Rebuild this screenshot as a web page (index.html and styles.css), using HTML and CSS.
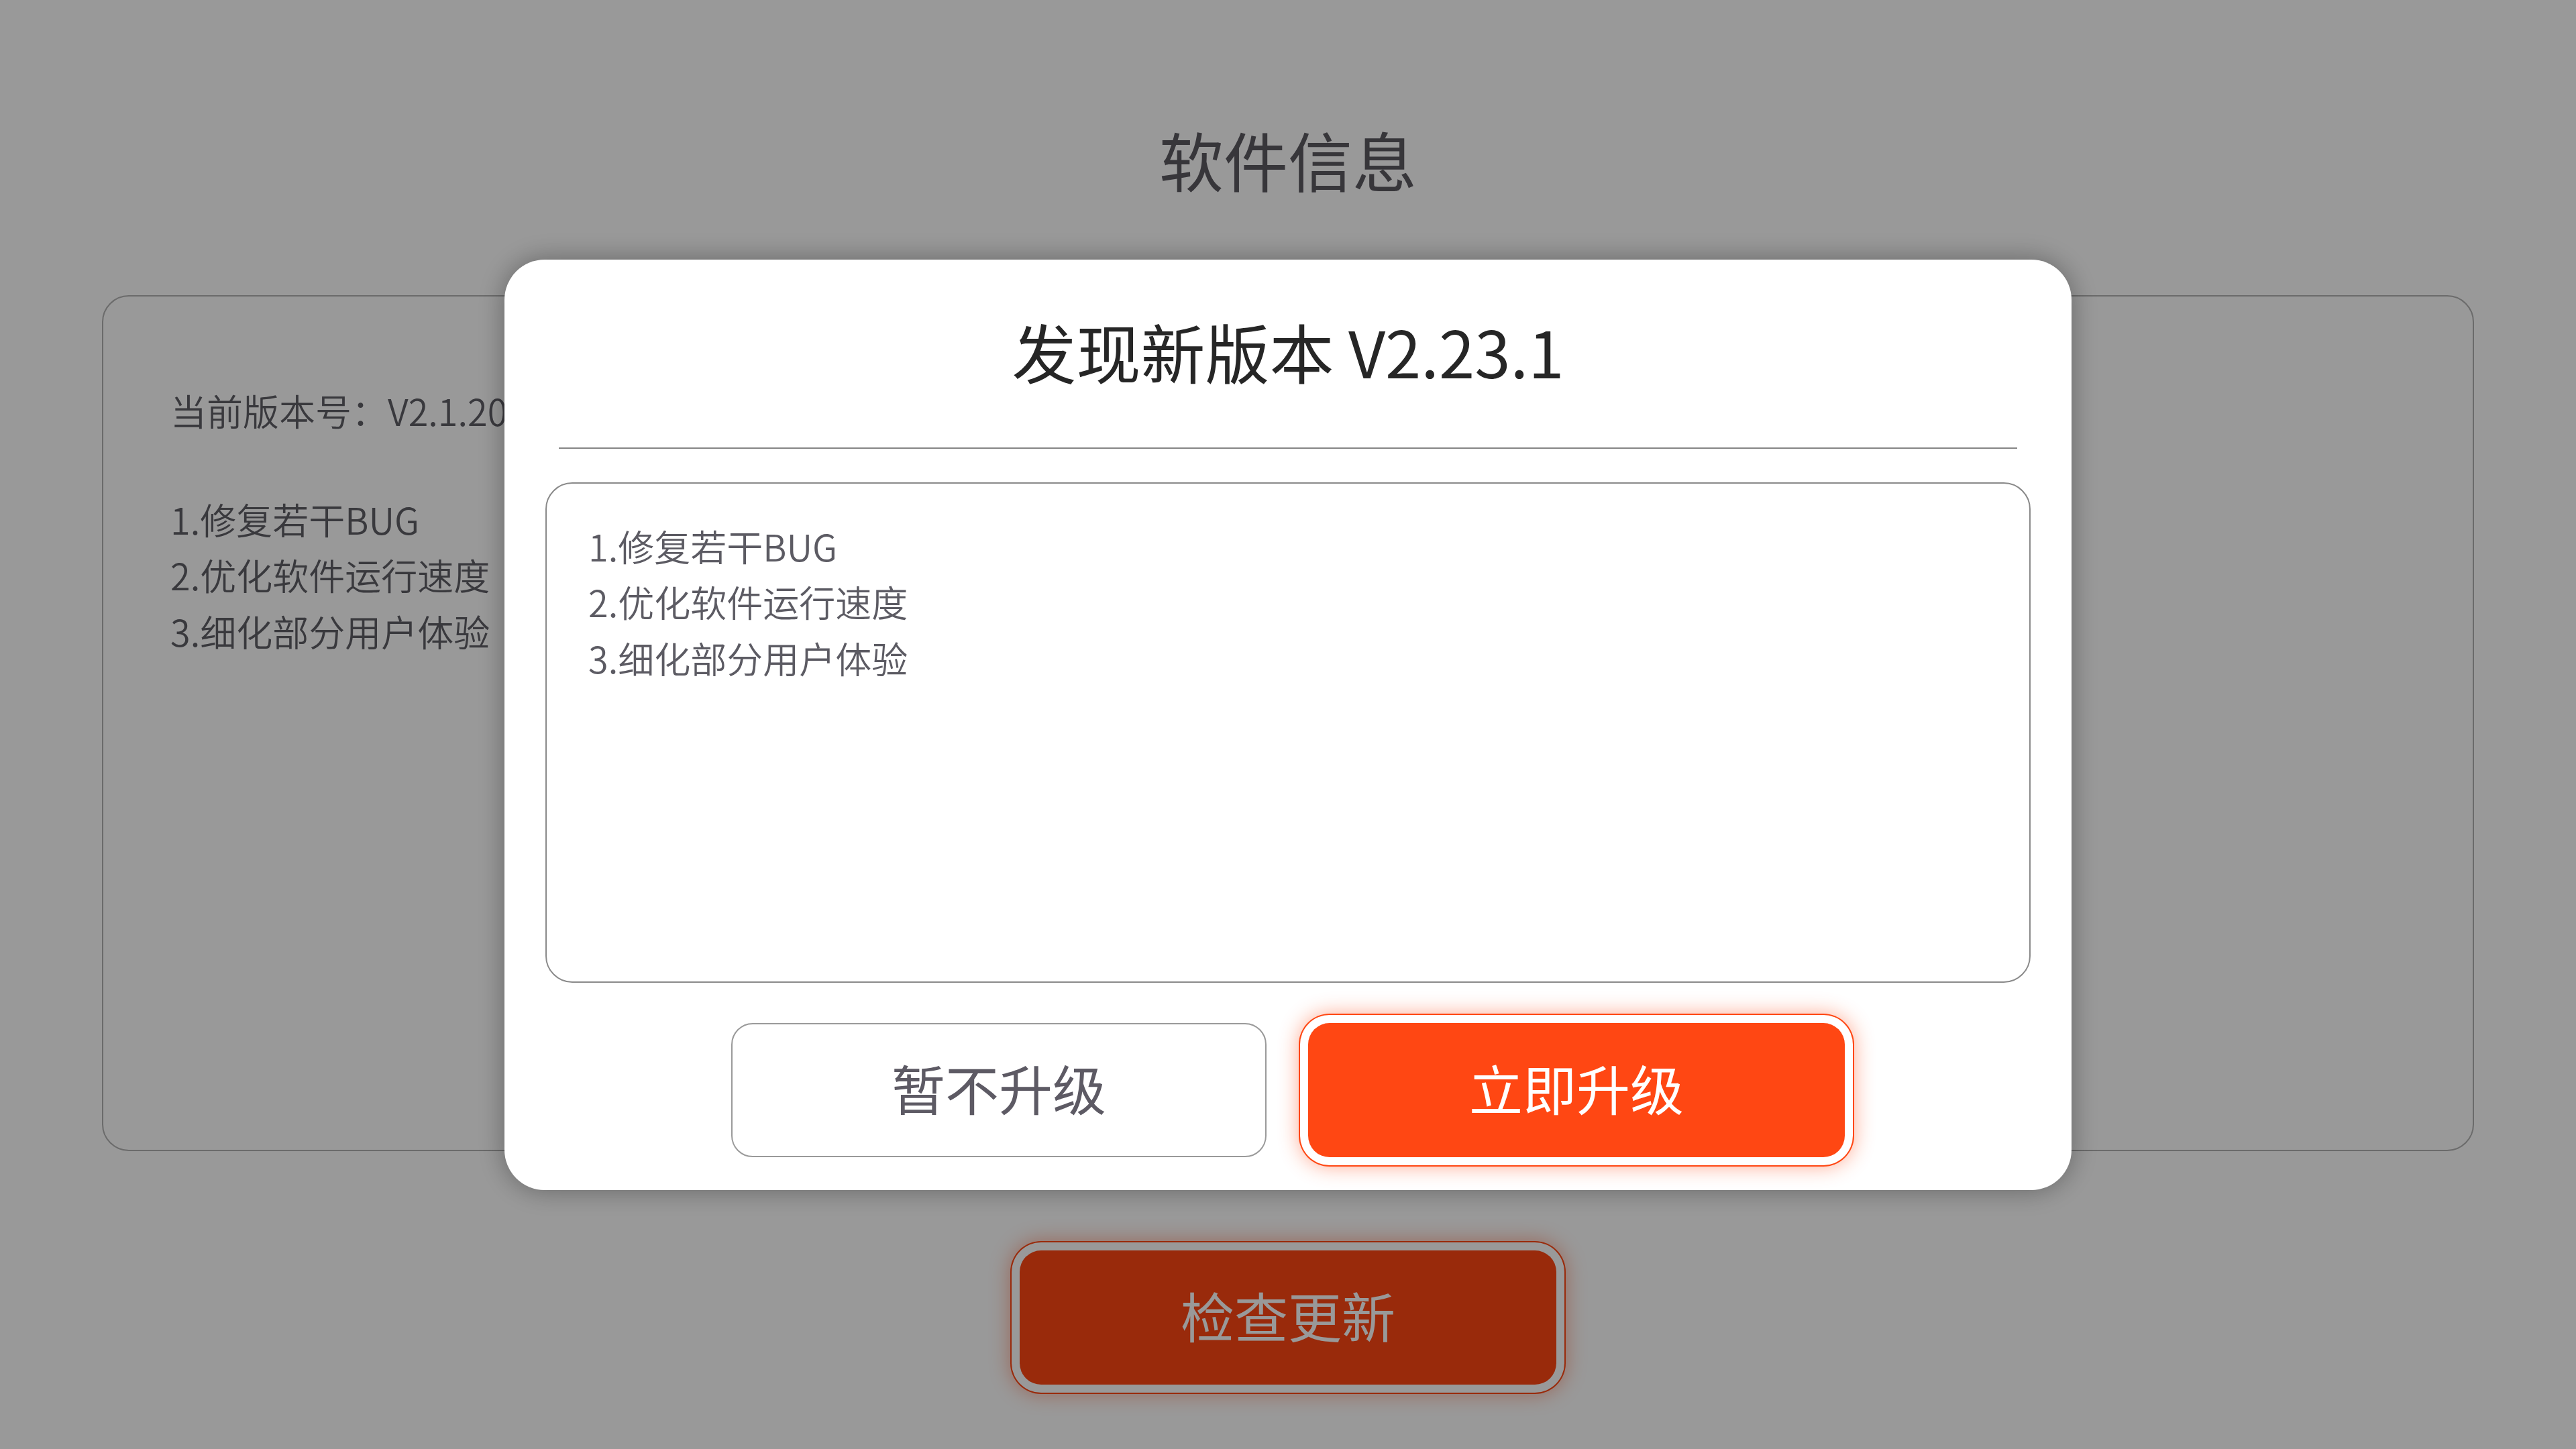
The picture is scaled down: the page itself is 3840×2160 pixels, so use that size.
FILE: index.html
```html
<!DOCTYPE html>
<html lang="zh-CN">
<head>
<meta charset="utf-8">
<title>软件信息</title>
<link rel="stylesheet" href="styles.css">
</head>
<body>
<div class="page">
  <h1 class="page-title">软件信息</h1>
  <section class="info-card">
    <p class="version">当前版本号：V2.1.20</p>
    <ul class="notes">
      <li>1.修复若干BUG</li>
      <li>2.优化软件运行速度</li>
      <li>3.细化部分用户体验</li>
    </ul>
  </section>
  <button class="btn btn-primary check-btn">检查更新</button>
</div>

<div class="overlay">
  <div class="modal">
    <h2 class="modal-title">发现新版本 V2.23.1</h2>
    <div class="divider"></div>
    <div class="changelog">
      <ul class="notes">
        <li>1.修复若干BUG</li>
        <li>2.优化软件运行速度</li>
        <li>3.细化部分用户体验</li>
      </ul>
    </div>
    <div class="actions">
      <button class="btn btn-ghost">暂不升级</button>
      <button class="btn btn-primary">立即升级</button>
    </div>
  </div>
</div>
</body>
</html>
```

FILE: styles.css
```css
* { box-sizing: border-box; }

html, body {
  margin: 0;
  padding: 0;
}

body {
  width: 3840px;
  height: 2160px;
  background: #ffffff;
  font-family: "Noto Sans CJK SC", "Noto Sans", sans-serif;
  overflow: hidden;
}

.page {
  display: flex;
  flex-direction: column;
  align-items: center;
}

.page-title {
  margin: 189px 0 0;
  font-size: 96px;
  line-height: 1;
  font-weight: 400;
  color: #5d5a62;
}

.info-card {
  margin-top: 155px;
  width: 3536px;
  height: 1276px;
  border: 2px solid #b2b2b2;
  border-radius: 40px;
  padding: 128px 100px 0;
  color: #605f67;
}

.version {
  margin: 0 0 78px;
  font-size: 54px;
  line-height: 83.5px;
  font-weight: 350;
}

.notes {
  list-style: none;
  margin: 0;
  padding: 0;
  font-size: 54px;
  line-height: 83.5px;
  font-weight: 350;
}

.btn {
  font-family: "Noto Sans CJK SC", "Noto Sans", sans-serif;
  font-size: 80px;
  line-height: 1;
  height: 200px;
  border-radius: 32px;
  padding: 0 0 10px;
  cursor: pointer;
}

.btn-primary {
  width: 800px;
  border: none;
  background: #ff4713;
  color: #ffffff;
  box-shadow: 0 0 0 12px #ffffff, 0 0 0 14px #ff4713, 0 0 30px 14px rgba(255, 71, 19, 0.45);
}

.btn-ghost {
  width: 798px;
  background: #ffffff;
  border: 2px solid #9a9a9a;
  color: #5d5a64;
}

.check-btn {
  margin-top: 148px;
}

.overlay {
  position: fixed;
  inset: 0;
  background: rgba(0, 0, 0, 0.4);
  display: flex;
  align-items: center;
  justify-content: center;
}

.modal {
  width: 2336px;
  height: 1387px;
  background: #ffffff;
  border-radius: 60px;
  box-shadow: 0 0 40px rgba(0, 0, 0, 0.35);
  padding: 88px 61px 49px;
  display: flex;
  flex-direction: column;
}

.modal-title {
  margin: 0;
  text-align: center;
  font-size: 96px;
  line-height: 1;
  font-weight: 400;
  color: #262626;
}

.divider {
  margin: 96px 20px 0;
  height: 2px;
  background: #858585;
}

.changelog {
  margin-top: 50px;
  height: 746px;
  border: 2px solid #8a8a8a;
  border-radius: 40px;
  padding: 51px 62px 0;
  color: #5c5b63;
}

.actions {
  margin-top: 60px;
  display: flex;
  justify-content: center;
  gap: 62px;
}
```
